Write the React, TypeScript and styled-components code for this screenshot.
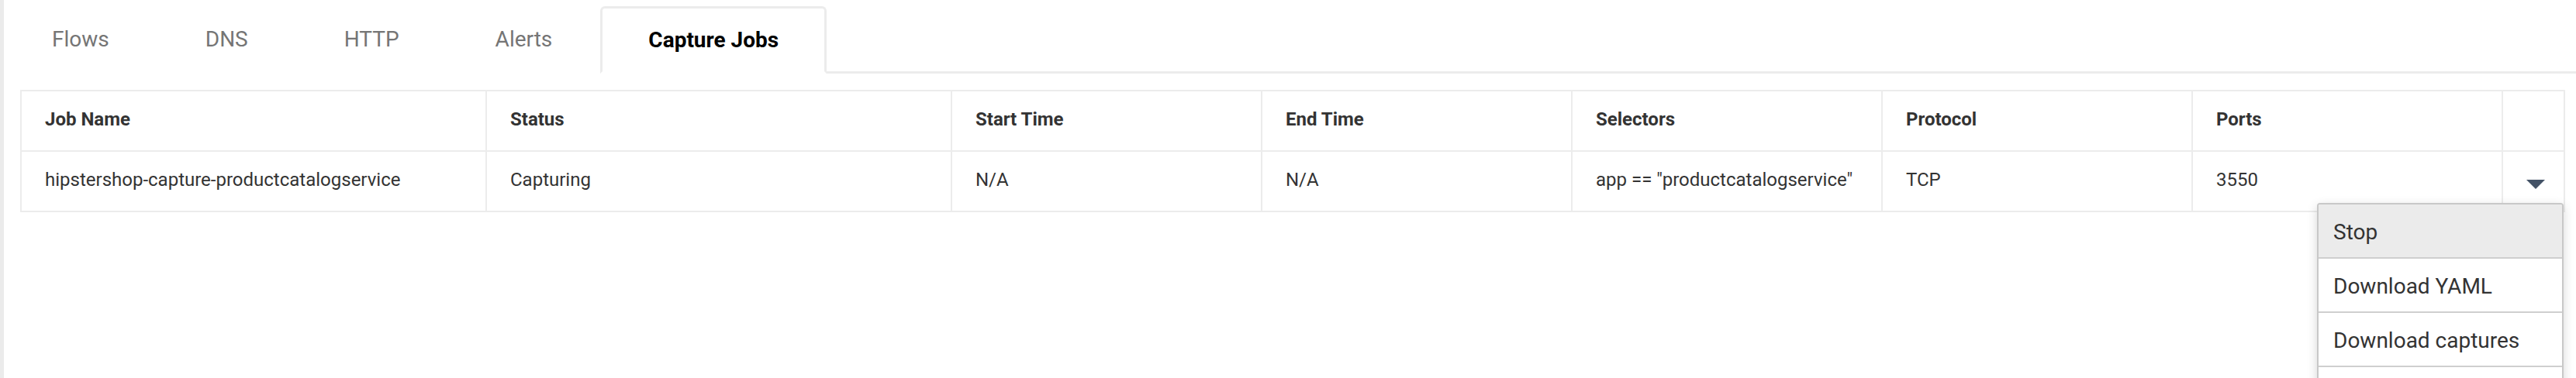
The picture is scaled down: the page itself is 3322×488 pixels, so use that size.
import React from "react";
import styled, { createGlobalStyle } from "styled-components";

const GlobalStyle = createGlobalStyle`
  html, body {
    margin: 0;
    padding: 0;
    overflow: hidden;
    background: #ffffff;
  }
  body {
    font-family: Roboto, "Liberation Sans", Arial, sans-serif;
  }
  *, *::before, *::after {
    box-sizing: border-box;
  }
`;

const Page = styled.div`
  width: 3322px;
  height: 488px;
  border-left: 5px solid #ebebeb;
  background: #ffffff;
  overflow: hidden;
`;

const TabBar = styled.nav`
  display: flex;
  align-items: flex-end;
  height: 95px;
  padding-top: 8px;
  border-bottom: 3px solid #ececec;
`;

const Tab = styled.button<{ $active?: boolean }>`
  height: 87px;
  margin-bottom: -3px;
  padding: 0 59px ${(p) => (p.$active ? "0" : "3px")};
  border: 3px solid ${(p) => (p.$active ? "#ececec" : "transparent")};
  border-bottom-color: ${(p) => (p.$active ? "#ffffff" : "transparent")};
  border-radius: 6px 6px 0 0;
  background: #ffffff;
  font-family: Roboto, "Liberation Sans", Arial, sans-serif;
  font-size: 28px;
  font-weight: ${(p) => (p.$active ? 700 : 400)};
  color: ${(p) => (p.$active ? "#000000" : "#757575")};
  cursor: pointer;
  white-space: nowrap;
`;

const TableWrap = styled.div`
  position: relative;
  width: 3282px;
  margin: 21px 0 0 21px;
  border: 2px solid #ececec;
`;

const Grid = styled.div`
  display: grid;
  grid-template-columns: 600px 600px repeat(5, 400px) 78px;
`;

const Cell = styled.div<{ $head?: boolean; $last?: boolean }>`
  display: flex;
  align-items: center;
  height: ${(p) => (p.$head ? "78px" : "76px")};
  padding: 0 30px 5px;
  border-right: ${(p) => (p.$last ? "0" : "2px")} solid #ececec;
  border-bottom: ${(p) => (p.$head ? "2px" : "0")} solid #ececec;
  font-size: 24px;
  font-weight: ${(p) => (p.$head ? 700 : 400)};
  color: #333333;
  white-space: nowrap;
`;

const ActionCell = styled.div`
  display: flex;
  align-items: center;
  justify-content: center;
  height: 76px;
  padding: 7px 0 0 6px;
`;

const Caret = styled.svg`
  display: block;
  width: 24px;
  height: 12px;
  fill: #435266;
`;

const Menu = styled.ul`
  position: absolute;
  top: 144px;
  right: 0;
  width: 318px;
  margin: 0;
  padding: 0;
  list-style: none;
  background: #ffffff;
  border: 2px solid #c8c8c8;
  border-radius: 4px;
  overflow: hidden;
  box-shadow: 0 4px 14px rgba(0, 0, 0, 0.16);
  z-index: 2;
`;

const MenuItem = styled.li<{ $hover?: boolean }>`
  display: flex;
  align-items: center;
  height: 70px;
  padding: 3px 19px 0;
  border-bottom: 2px solid #cfcfcf;
  background: ${(p) => (p.$hover ? "#ebebeb" : "#ffffff")};
  font-size: 28px;
  color: #333333;
  white-space: nowrap;
  cursor: pointer;
`;

const tabs = ["Flows", "DNS", "HTTP", "Alerts", "Capture Jobs"];
const headers = ["Job Name", "Status", "Start Time", "End Time", "Selectors", "Protocol", "Ports"];
const row = [
  "hipstershop-capture-productcatalogservice",
  "Capturing",
  "N/A",
  "N/A",
  'app == "productcatalogservice"',
  "TCP",
  "3550",
];
const menu = ["Stop", "Download YAML", "Download captures", ""];

export default function App() {
  return (
    <>
      <GlobalStyle />
      <Page>
        <TabBar>
          {tabs.map((t) => (
            <Tab key={t} $active={t === "Capture Jobs"}>
              {t}
            </Tab>
          ))}
        </TabBar>
        <TableWrap>
          <Grid>
            {headers.map((h) => (
              <Cell key={h} $head>
                {h}
              </Cell>
            ))}
            <Cell $head $last />
            {row.map((v, i) => (
              <Cell key={i}>{v}</Cell>
            ))}
            <ActionCell>
              <Caret viewBox="0 0 24 12">
                <polygon points="0,0 24,0 12,12" />
              </Caret>
            </ActionCell>
          </Grid>
          <Menu>
            {menu.map((m, i) => (
              <MenuItem key={i} $hover={i === 0}>
                {m}
              </MenuItem>
            ))}
          </Menu>
        </TableWrap>
      </Page>
    </>
  );
}
